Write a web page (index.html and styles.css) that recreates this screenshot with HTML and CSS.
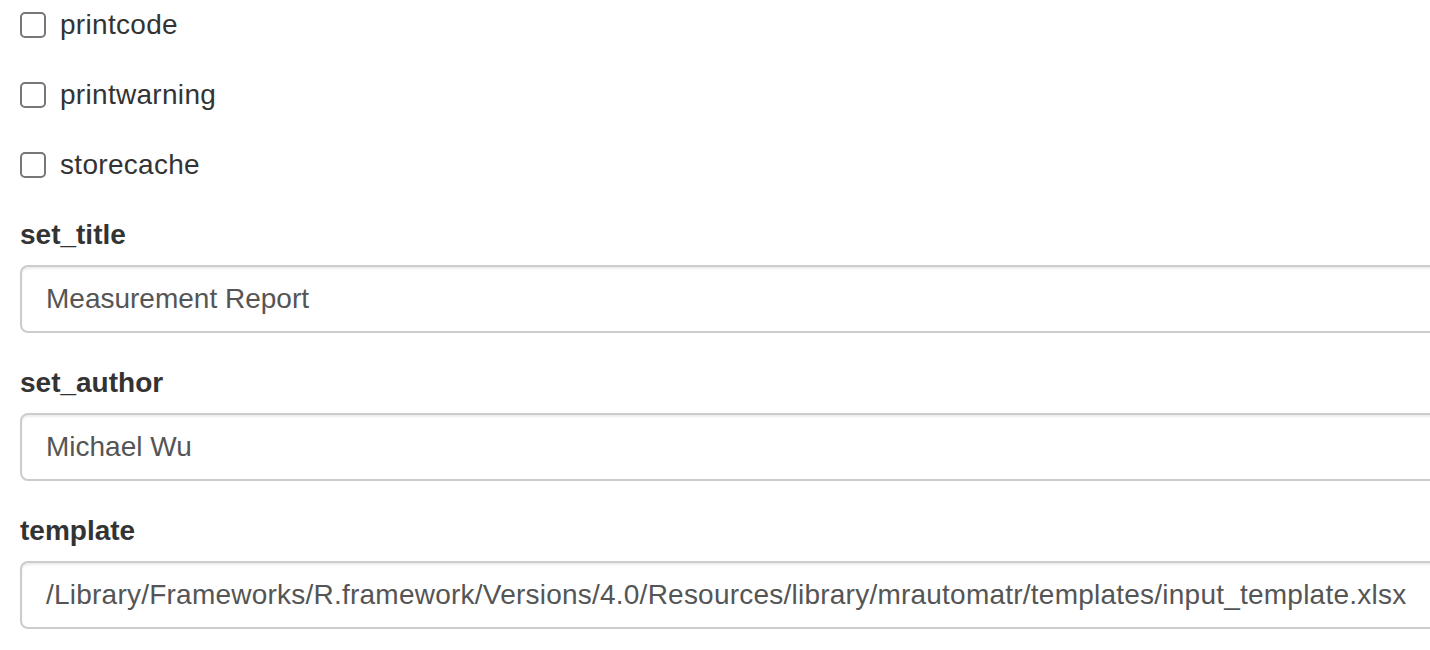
FILE: index.html
```html
<!DOCTYPE html>
<html>
<head>
<meta charset="utf-8">
<link rel="stylesheet" href="styles.css">
</head>
<body>
<div class="panel">
  <div class="form-group check-group">
    <label class="check"><span class="box"></span><span class="check-text">printcode</span></label>
  </div>
  <div class="form-group check-group">
    <label class="check"><span class="box"></span><span class="check-text">printwarning</span></label>
  </div>
  <div class="form-group check-group">
    <label class="check"><span class="box"></span><span class="check-text">storecache</span></label>
  </div>
  <div class="form-group">
    <label class="lbl">set_title</label>
    <div class="input">Measurement Report</div>
  </div>
  <div class="form-group">
    <label class="lbl">set_author</label>
    <div class="input">Michael Wu</div>
  </div>
  <div class="form-group">
    <label class="lbl">template</label>
    <div class="input path">/Library/Frameworks/R.framework/Versions/4.0/Resources/library/mrautomatr/templates/input_template.xlsx</div>
  </div>
</div>
</body>
</html>
```
FILE: styles.css
```css
html, body {
  margin: 0;
  padding: 0;
  overflow: hidden;
  background: #fff;
}
body {
  font-family: "Liberation Sans", Arial, sans-serif;
  font-size: 28px;
  line-height: 40px;
  color: #333;
}
.panel {
  padding: 5px 0 0 20px;
  width: 1480px;
}
.form-group {
  margin-bottom: 30px;
}
.check {
  display: flex;
  align-items: center;
  height: 40px;
  gap: 14px;
}
.check-text {
  letter-spacing: 0.3px;
}
.box {
  width: 22px;
  height: 22px;
  border: 2px solid #777;
  border-radius: 5px;
  background: #fff;
  flex: none;
}
.lbl {
  display: inline-block;
  font-weight: bold;
  margin-bottom: 10px;
}
.input {
  box-sizing: border-box;
  height: 68px;
  border: 2px solid #ccc;
  border-radius: 8px;
  padding: 12px 24px;
  color: #555;
  white-space: nowrap;
  box-shadow: inset 0 2px 2px rgba(0,0,0,0.075);
  line-height: 40px;
}
.path {
  letter-spacing: 0.23px;
}
```
